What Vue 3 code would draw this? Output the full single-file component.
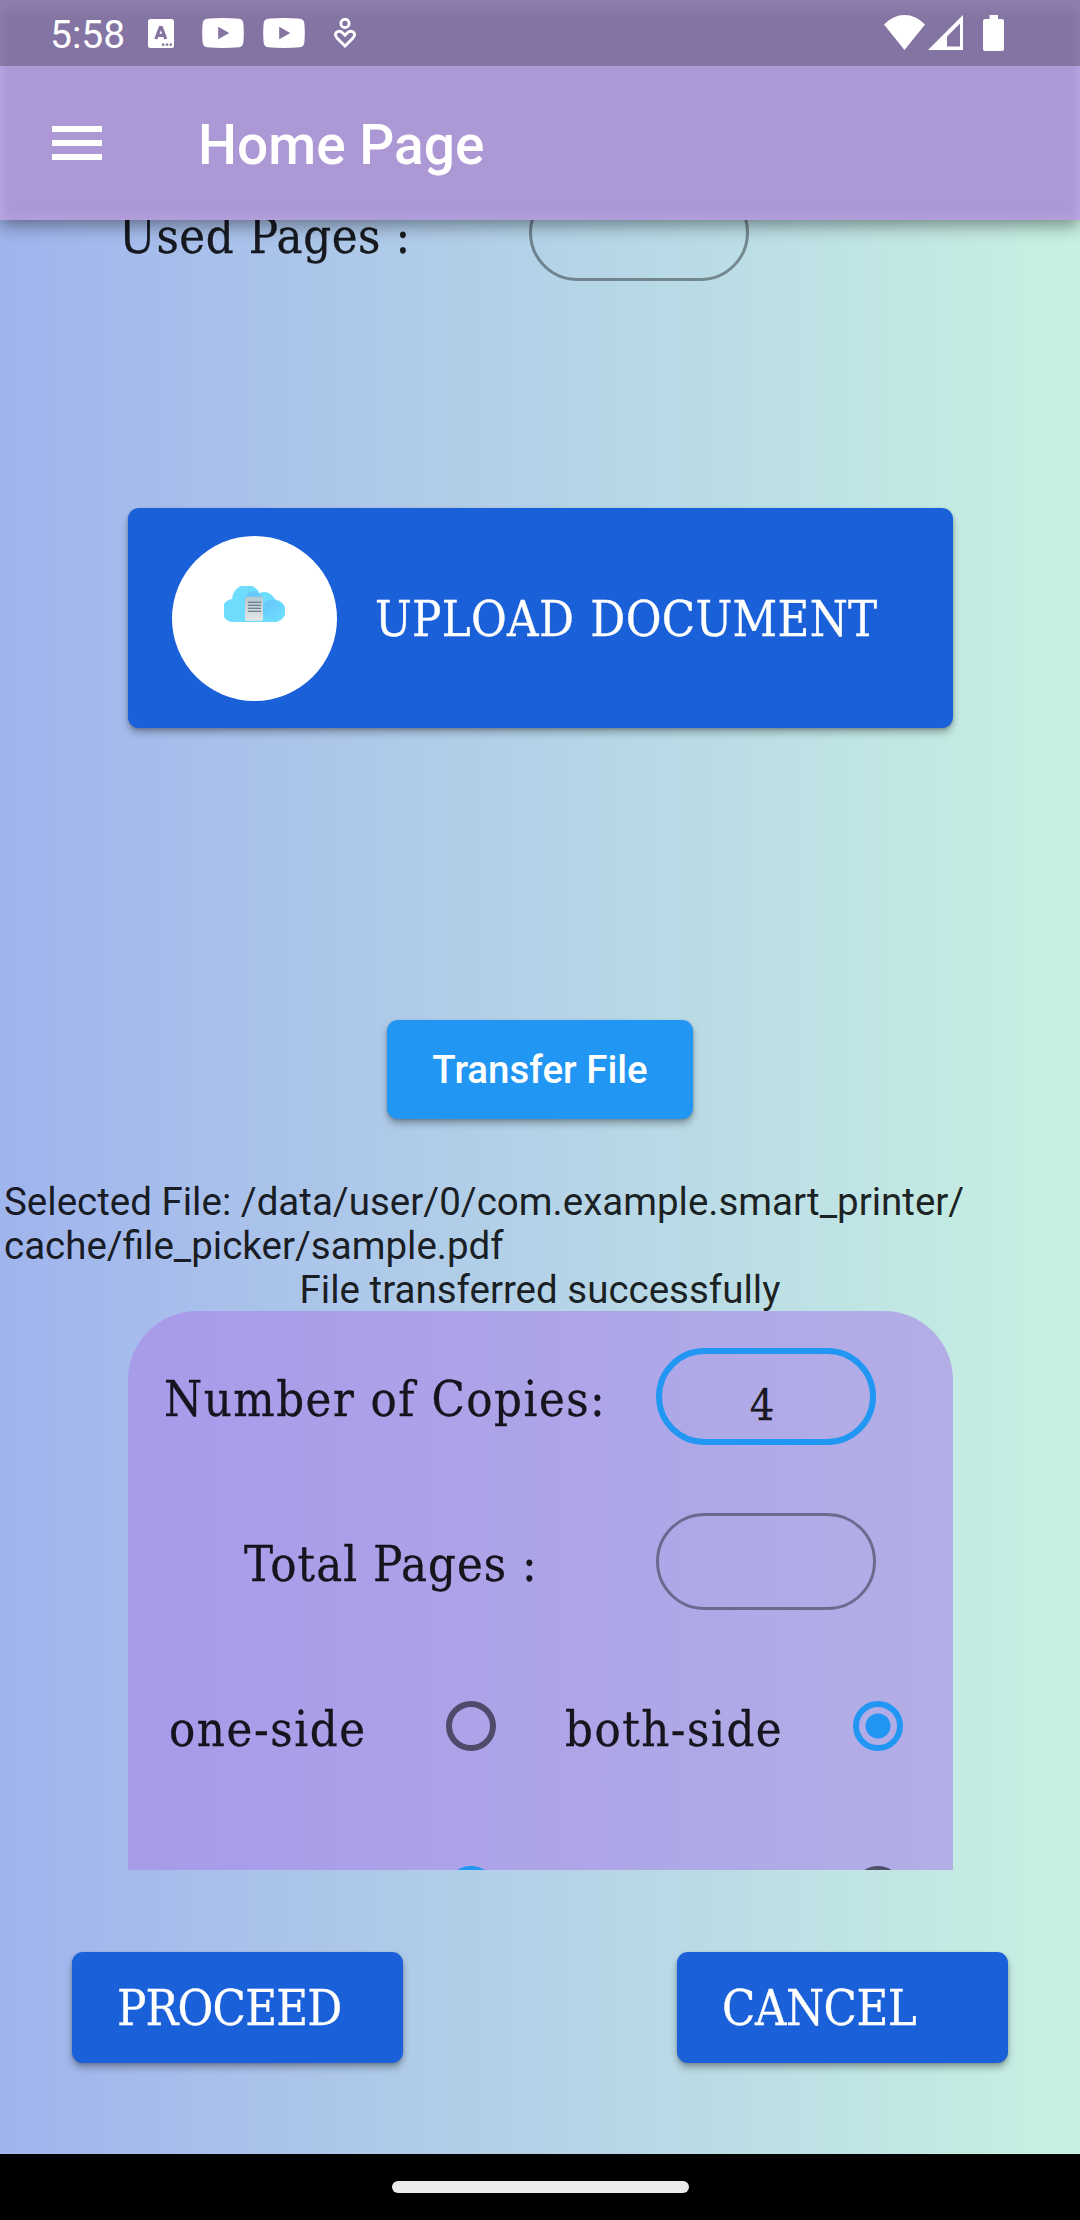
<script setup>
const textRows = [
  { label: 'Number of Copies:', value: '4', kind: 'copies' },
  { label: 'Total Pages :', value: '', kind: 'total' },
]
const sideOptions = [
  { label: 'one-side', kind: 'one', checked: false },
  { label: 'both-side', kind: 'both', checked: true },
]
</script>

<template>
  <div class="screen">
    <header class="top">
      <div class="status">
        <span class="time">5:58</span>
        <svg class="ic-a" viewBox="0 0 26 29">
          <rect width="26" height="29" rx="2.5" fill="#fff" />
          <path d="M7.8 20 12.2 8.500H13.400L17.800 20M9.300 16.300H16" fill="none" stroke="#8573a0" stroke-width="3.200" />
          <path d="M14 24.400h2.400v2.400H14zM17.800 24.400h2.400v2.400h-2.400zM21.600 24.400H24v2.400h-2.400z" fill="#8573a0" />
        </svg>
        <svg class="ic-yt" viewBox="0 0 42 30">
          <path d="M5 .8Q21-.6 37 .8 41 1.200 41.400 6 42.200 15 41.400 24 41 28.800 37 29.200 21 30.600 5 29.200 1 28.800.6 24-.2 15 .6 6 1 1.200 5 .8Z" fill="#fff" />
          <path d="M16.200 8.800v12.500L27.300 15z" fill="#8573a0" />
        </svg>
        <svg class="ic-yt second" viewBox="0 0 42 30">
          <path d="M5 .8Q21-.6 37 .8 41 1.200 41.400 6 42.200 15 41.400 24 41 28.800 37 29.200 21 30.600 5 29.200 1 28.800.6 24-.2 15 .6 6 1 1.200 5 .8Z" fill="#fff" />
          <path d="M16.200 8.800v12.500L27.300 15z" fill="#8573a0" />
        </svg>
        <svg class="ic-heart" viewBox="0 0 22 30" fill="none" stroke="#fff" stroke-width="2.800">
          <circle cx="11" cy="5.400" r="4.100" />
          <path d="M11 28 3 20Q.2 16.500 2.300 14.400 5.500 11.900 8.300 14.500L11 17.300l2.700-2.800Q16.500 11.900 19.700 14.400 21.800 16.500 19 20Z" />
        </svg>
        <div class="status-right">
          <svg class="ic-wifi" viewBox="0 0 41 35">
            <path d="M20.500 35 0 9.500Q9 0 20.500 0T41 9.500z" fill="#fff" />
          </svg>
          <svg class="ic-signal" viewBox="0 0 35 35">
            <path fill-rule="evenodd" d="M35 0v35H0zM32 8.500 19 21.500V31.500H32z" fill="#fff" />
          </svg>
          <svg class="ic-battery" viewBox="0 0 21 36">
            <path d="M6.500 0h8.500v4h4q2 0 2 2v28q0 2-2 2H2q-2 0-2-2V6q0-2 2-2h4.500z" fill="#fff" />
          </svg>
        </div>
      </div>
      <div class="appbar">
        <div class="menu"><i></i><i></i><i></i></div>
        <h1>Home Page</h1>
      </div>
    </header>

    <main class="scroll">
      <div class="used-row">
        <span class="label used-label">Used Pages :</span>
        <div class="field used-field"></div>
      </div>

      <button class="upload">
        <span class="disc">
          <svg class="cloud" viewBox="0 0 61 36">
            <defs>
              <linearGradient id="paper" x1="0" y1="0" x2="0" y2="1">
                <stop offset="0" stop-color="#b4c7d0" />
                <stop offset="1" stop-color="#e6e6e6" />
              </linearGradient>
              <linearGradient id="shade" x1="0" y1="0" x2="1" y2="1">
                <stop offset="0" stop-color="#66c4fb" />
                <stop offset="1" stop-color="#6edcfd" />
              </linearGradient>
            </defs>
            <path d="M11 36A11.500 11.500 0 0 1 8 13 14.500 14.500 0 0 1 35.500 7Q45 3 51.500 13.500A11.500 11.500 0 0 1 53 36Z" fill="#6edcfd" />
            <path d="M20 13Q23 5.500 29 5.500 36 6 39 13V16H20Z" fill="#67c9fb" />
            <circle cx="48" cy="23.500" r="10" fill="url(#shade)" />
            <rect x="21" y="10.700" width="18" height="24" rx="1" fill="url(#paper)" />
            <path d="M24 16.300h13M24 19.300h13M24 22.300h13M24 25.300h13" stroke="#4d6678" stroke-width="1.100" />
          </svg>
        </span>
        <span class="upload-text">UPLOAD DOCUMENT</span>
      </button>

      <button class="transfer">Transfer File</button>

      <p class="path">Selected File: /data/user/0/com.example.smart_printer/<br />cache/file_picker/sample.pdf</p>
      <p class="result">File transferred successfully</p>

      <section class="panel">
        <div v-for="row in textRows" :key="row.kind" class="row" :class="row.kind">
          <span class="label">{{ row.label }}</span>
          <div class="field" :class="{ focused: row.value }">{{ row.value }}</div>
        </div>
        <div class="row">
          <div v-for="opt in sideOptions" :key="opt.kind" class="option" :class="opt.kind">
            <span class="label">{{ opt.label }}</span>
            <span class="radio" :class="{ checked: opt.checked }"></span>
          </div>
        </div>
        <div class="row radios-only">
          <span class="radio checked"></span>
          <span class="radio"></span>
        </div>
      </section>
    </main>

    <footer class="actions">
      <button class="action proceed">PROCEED</button>
      <button class="action cancel">CANCEL</button>
    </footer>
    <div class="nav"><i></i></div>
  </div>
</template>

<style>
body {
  margin: 0;
}
</style>

<style scoped>
.screen {
  width: 1080px;
  height: 2220px;
  display: flex;
  flex-direction: column;
  overflow: hidden;
  background: linear-gradient(90deg, #a0b4ed, #c8f1e2);
  font-family: Roboto, sans-serif;
  color: rgba(0, 0, 0, 0.87);
}
button {
  border: 0;
  margin: 0;
  padding: 0;
  color: #fff;
  border-radius: 11px;
  box-shadow: 0 5px 7px rgba(0, 0, 0, 0.27), 0 1px 3px rgba(0, 0, 0, 0.2);
}
.top {
  flex: none;
  height: 220px;
  position: relative;
  z-index: 1;
  background: #ac98d4;
  box-shadow: inset 0 10px 14px -2px #bba7e3, inset 0 0 12px #bba7e3, 0 6px 16px rgba(0, 0, 0, 0.4);
}
.status {
  height: 66px;
  display: flex;
  align-items: flex-start;
  background: rgba(0, 0, 0, 0.23);
}
.status svg {
  display: block;
  flex: none;
}
.time {
  width: 98px;
  margin-left: 50px;
  font-size: 39px;
  line-height: 46px;
  margin-top: 12px;
  color: #fff;
}
.ic-a {
  width: 26px;
  height: 29px;
  margin-top: 19px;
}
.ic-yt {
  width: 42px;
  height: 30px;
  margin: 18px 0 0 28px;
}
.ic-yt.second {
  margin-left: 19px;
}
.ic-heart {
  width: 22px;
  height: 30px;
  margin: 18px 0 0 29px;
}
.status-right {
  display: flex;
  margin: 15px 76px 0 auto;
}
.ic-wifi {
  width: 41px;
  height: 35px;
}
.ic-signal {
  width: 35px;
  height: 35px;
  margin-left: 3px;
}
.ic-battery {
  width: 21px;
  height: 36px;
  margin-left: 20px;
}
.appbar {
  height: 154px;
  display: flex;
  align-items: center;
}
.menu {
  width: 50px;
  height: 34px;
  margin: 0 0 0 52px;
  display: flex;
  flex-direction: column;
  justify-content: space-between;
}
.menu i {
  height: 6px;
  background: #fff;
}
h1 {
  margin: 4px 0 0 96px;
  font-size: 55px;
  font-weight: 500;
  color: #fff;
}
.scroll {
  flex: none;
  height: 1650px;
  overflow: hidden;
  display: flex;
  flex-direction: column;
}
.label,
.upload-text,
.action,
.field {
  font-family: 'DejaVu Serif Condensed', 'DejaVu Serif', serif;
  font-size: 48.500px;
  white-space: nowrap;
  -webkit-text-stroke: 0.3px currentColor;
}
.label {
  line-height: 96px;
  padding-top: 3px;
}
.used-row {
  flex: none;
  height: 96px;
  margin-top: -36px;
  display: flex;
}
.used-label {
  width: 410px;
  margin-left: 119px;
  padding-top: 4px;
  letter-spacing: 0.600px;
}
.field {
  box-sizing: border-box;
  width: 220px;
  height: 97px;
  border: 3px solid rgba(0, 0, 0, 0.38);
  border-radius: 49px;
  font-size: 43px;
  text-align: center;
}
.field.focused {
  border: 6px solid #2196f3;
  line-height: 103px;
  padding-right: 8px;
}
.upload {
  flex: none;
  width: 825px;
  height: 220px;
  margin: 228px 0 0 128px;
  display: flex;
  align-items: center;
  background: #1a60d9;
}
.disc {
  width: 165px;
  height: 165px;
  margin-left: 44px;
  border-radius: 50%;
  background: #fff;
  display: flex;
  justify-content: center;
}
.cloud {
  width: 61px;
  height: 36px;
  margin-top: 50px;
}
.upload-text {
  margin: 2px 0 0 38px;
  letter-spacing: 0.3px;
  word-spacing: 2px;
}
.transfer {
  flex: none;
  width: 306px;
  height: 99px;
  margin: 292px 0 0 387px;
  background: #2196f3;
  font: 500 38.500px/99px Roboto, sans-serif;
}
p {
  flex: none;
  margin: 0;
  font-size: 38.500px;
  line-height: 44px;
  white-space: nowrap;
}
.path {
  margin: 61px 0 0 4px;
}
.result {
  text-align: center;
}
.panel {
  flex: none;
  box-sizing: border-box;
  width: 825px;
  height: 700px;
  margin: -1px 0 0 128px;
  padding-top: 37px;
  border-radius: 69px;
  background: linear-gradient(90deg, #a79bea, #b3aee6);
  display: flex;
  flex-direction: column;
  gap: 69px;
}
.row {
  flex: none;
  height: 96px;
  display: flex;
}
.copies .label {
  width: 492px;
  margin-left: 36px;
  letter-spacing: 1.500px;
}
.total .label {
  width: 412px;
  margin-left: 116px;
  letter-spacing: 1px;
}
.option {
  display: flex;
  align-items: center;
}
.option .label {
  padding-top: 6px;
}
.one {
  width: 437px;
}
.one .label {
  width: 277px;
  margin-left: 41px;
  letter-spacing: 1.600px;
}
.both .label {
  width: 288px;
  letter-spacing: 1.500px;
}
.radio {
  box-sizing: border-box;
  flex: none;
  width: 50px;
  height: 50px;
  border: 6px solid rgba(0, 0, 0, 0.54);
  border-radius: 50%;
}
.radio.checked {
  border-color: #2196f3;
  background: radial-gradient(circle, #2196f3 12px, transparent 13px);
}
.radios-only {
  align-items: center;
}
.radios-only .radio:first-child {
  margin: 0 357px 0 318px;
}
.actions {
  flex: none;
  height: 284px;
  display: flex;
  align-items: flex-start;
  justify-content: space-between;
  padding: 0 72px;
}
.action {
  width: 331px;
  height: 111px;
  margin-top: 82px;
  padding-left: 45px;
  text-align: left;
  letter-spacing: -0.800px;
  background: #1a60d9;
}
.cancel {
  letter-spacing: -0.500px;
}
.nav {
  flex: 1;
  background: #000;
  display: flex;
  justify-content: center;
}
.nav i {
  width: 297px;
  height: 12px;
  margin-top: 27px;
  border-radius: 6px;
  background: #ebebeb;
}
</style>
